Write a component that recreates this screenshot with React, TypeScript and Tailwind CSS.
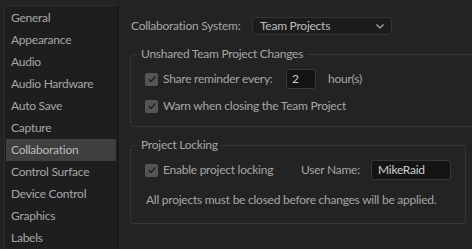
import { useState } from "react";

const sections = [
  "General",
  "Appearance",
  "Audio",
  "Audio Hardware",
  "Auto Save",
  "Capture",
  "Collaboration",
  "Control Surface",
  "Device Control",
  "Graphics",
  "Labels",
];

function Check({ label }: { label: string }) {
  return (
    <label className="flex h-5 items-center gap-[5px]">
      <span className="flex size-[13px] items-center justify-center rounded-[2px] bg-[#555555]">
        <svg viewBox="0 0 12 12" className="size-[10px]" fill="none">
          <path d="M2 6.2 4.8 9 10 3" stroke="#1e1e1e" strokeWidth="1.8" />
        </svg>
      </span>
      <span>{label}</span>
    </label>
  );
}

function Group({ title, className, children }: { title: string; className: string; children: React.ReactNode }) {
  return (
    <div className={`relative rounded-[3px] border border-[#363636] ${className}`}>
      <span className="absolute -top-[9px] left-[6px] bg-[#232323] px-[4px] leading-4">{title}</span>
      {children}
    </div>
  );
}

export default function App() {
  const [active, setActive] = useState("Collaboration");

  return (
    <div
      className="flex h-[249px] w-[472px] overflow-hidden bg-[#232323] text-[12px] tracking-[-0.25px] text-[#a6a6a6]"
      style={{ fontFamily: "Lato, 'Noto Sans', sans-serif" }}
    >
      <div className="ml-[4px] mt-[5px] flex h-[260px] w-[115px] shrink-0 flex-col rounded-tl-[3px] border border-r-2 border-[#2e2e2e] border-r-[#191919] bg-[#1e1e1e] p-px">
        {sections.map((s) => (
          <div
            key={s}
            onClick={() => setActive(s)}
            className={`flex h-[22px] shrink-0 items-center pl-[5px] ${s === active ? "bg-[#3f3f3f] text-[#b8b8b8]" : ""}`}
          >
            {s}
          </div>
        ))}
      </div>

      <div className="flex min-w-0 flex-1 flex-col pl-[11px] pt-[17px]">
        <div className="flex h-[18px] items-center">
          <span className="ml-px w-[121px]">Collaboration System:</span>
          <div className="flex h-[18px] w-[140px] items-center justify-between rounded-[3px] border border-[#333333] bg-[#1c1c1c] pl-[7px] pr-[7px] text-[#bdbdbd]">
            <span>Team Projects</span>
            <svg viewBox="0 0 8 5" className="h-[5px] w-[8px]" fill="none">
              <path d="M0.5 0.5 4 4 7.5 0.5" stroke="#b0b0b0" strokeWidth="1.1" />
            </svg>
          </div>
        </div>

        <Group title="Unshared Team Project Changes" className="mt-[19px] w-[400px] shrink-0 pb-[10px] pl-[14px] pt-[14px]">
          <div className="flex items-center">
            <div className="w-[141px]">
              <Check label="Share reminder every:" />
            </div>
            <div className="flex h-5 w-[30px] items-center rounded-[3px] border border-[#383838] bg-[#141414] pl-[5px] text-[#cfcfcf]">
              2
            </div>
            <span className="ml-[12px]">hour(s)</span>
          </div>
          <div className="mt-[7px]">
            <Check label="Warn when closing the Team Project" />
          </div>
        </Group>

        <Group title="Project Locking" className="mt-[18px] w-[336px] pb-[15px] pl-[14px] pt-[14px]">
          <div className="flex items-center">
            <div className="w-[156px]">
              <Check label="Enable project locking" />
            </div>
            <span className="w-[70px]">User Name:</span>
            <div className="flex h-5 w-[80px] items-center rounded-[3px] border border-[#383838] bg-[#141414] pl-[6px] text-[#cfcfcf]">
              MikeRaid
            </div>
          </div>
          <p className="mt-[12px] pl-px leading-4">All projects must be closed before changes will be applied.</p>
        </Group>
      </div>
    </div>
  );
}
